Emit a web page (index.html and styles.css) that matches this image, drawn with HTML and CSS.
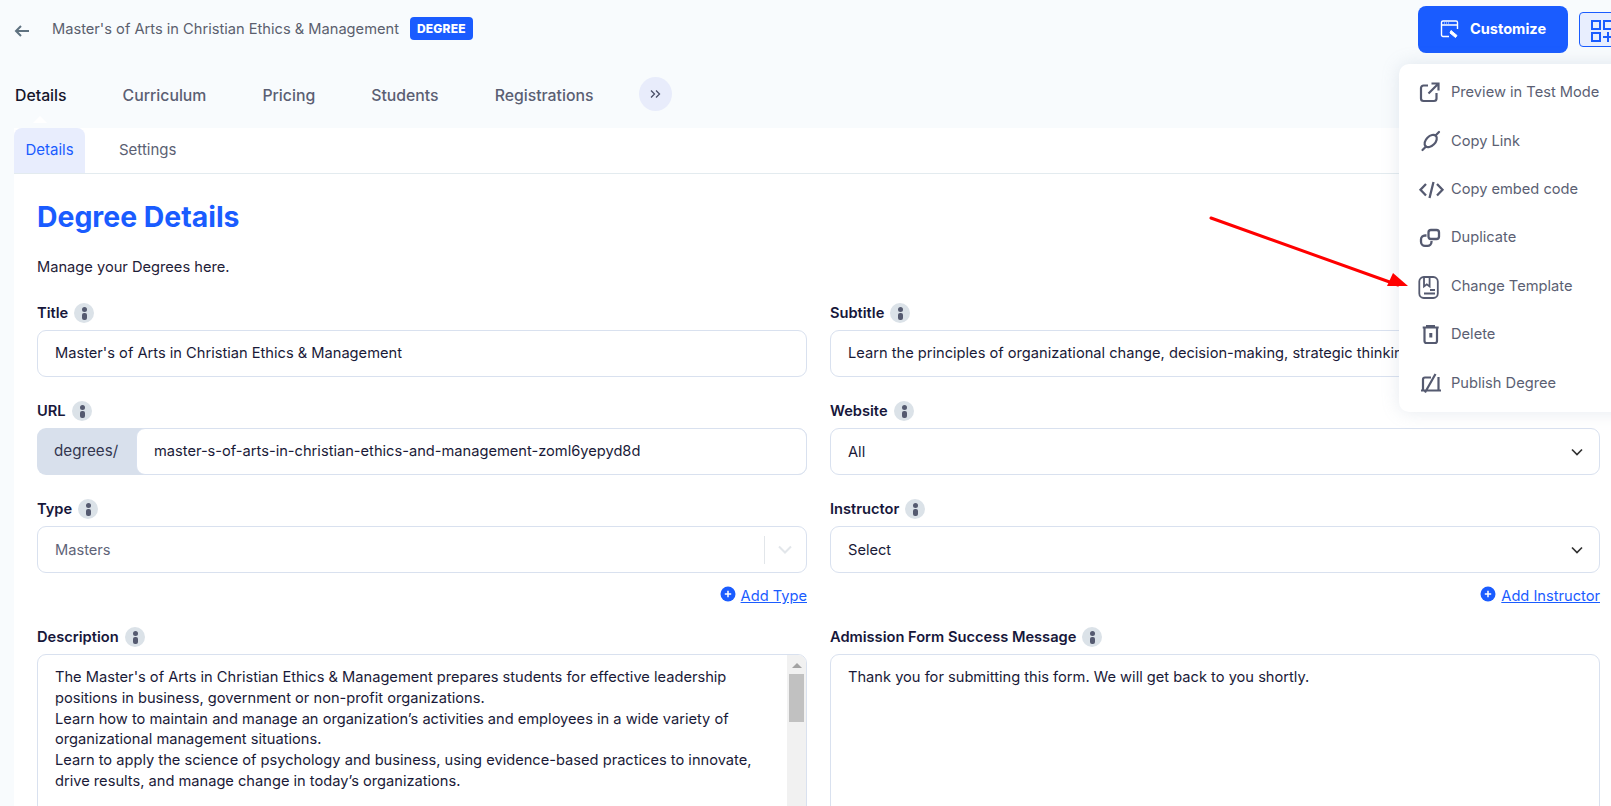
FILE: index.html
```html
<!DOCTYPE html>
<html lang="en">
<head>
<meta charset="utf-8">
<title>Degree Details</title>
<link rel="stylesheet" href="styles.css">
</head>
<body>
<header class="topbar">
  <svg class="back" viewBox="0 0 16 14" width="16" height="14"><path d="M15 7H2M7 2L2 7l5 5" fill="none" stroke="#5f7280" stroke-width="2"/></svg>
  <span class="crumb">Master's of Arts in Christian Ethics &amp; Management</span>
  <span class="badge">DEGREE</span>
  <div class="actions">
    <button class="customize">
      <svg viewBox="0 0 20 20" width="20" height="20" fill="none" stroke="#fff" stroke-width="1.400"><path d="M9 17.500H3a1.500 1.500 0 0 1-1.500-1.500V3.500A1.500 1.500 0 0 1 3 2h13a1.500 1.500 0 0 1 1.500 1.500V10M1.500 6h16"/><path d="M11 11.500l6 5-1.500 2-5.500-4.500z" fill="#fff" stroke-width="1"/><path d="M4 4h.8M6 4h.8M8 4h.8" stroke-width="1"/></svg>
      Customize
    </button>
    <button class="apps">
      <svg viewBox="0 0 24 24" width="24" height="24" fill="none" stroke="#1a5cff" stroke-width="2"><rect x="2" y="2" width="8" height="8"/><rect x="14" y="2" width="8" height="8"/><rect x="2" y="14" width="8" height="8"/><path d="M18 13v10M13 18h10"/></svg>
    </button>
  </div>
</header>

<nav class="tabs">
  <a class="tab active">Details</a>
  <a class="tab">Curriculum</a>
  <a class="tab">Pricing</a>
  <a class="tab">Students</a>
  <a class="tab">Registrations</a>
  <span class="more">
    <svg viewBox="0 0 12 10" width="12" height="10" fill="none" stroke="#4a4f66" stroke-width="1.300"><path d="M2 1.500L5.500 5 2 8.500M7 1.500L10.500 5 7 8.500"/></svg>
  </span>
</nav>

<main class="panel">
  <div class="subtabs">
    <a class="subtab active">Details</a>
    <a class="subtab">Settings</a>
  </div>
  <section class="body">
    <h1>Degree Details</h1>
    <p class="lead">Manage your Degrees here.</p>
    <div class="grid">
      <div class="field">
        <label>Title <i class="info"></i></label>
        <div class="input">Master's of Arts in Christian Ethics &amp; Management</div>
      </div>
      <div class="field">
        <label>Subtitle <i class="info"></i></label>
        <div class="input">Learn the principles of organizational change, decision-making, strategic thinking and leadership</div>
      </div>
      <div class="field">
        <label>URL <i class="info"></i></label>
        <div class="urlgroup">
          <span class="prefix">degrees/</span>
          <div class="input urlinput">master-s-of-arts-in-christian-ethics-and-management-zoml6yepyd8d</div>
        </div>
      </div>
      <div class="field">
        <label>Website <i class="info"></i></label>
        <div class="input select">All
          <svg class="chev" viewBox="0 0 12 8" width="12" height="8"><path d="M1 1.500l5 5 5-5" fill="none" stroke="#333" stroke-width="1.700"/></svg>
        </div>
      </div>
      <div class="field">
        <label>Type <i class="info"></i></label>
        <div class="input select disabled">Masters
          <span class="sep"></span>
          <svg class="chev" viewBox="0 0 14 9" width="14" height="9"><path d="M1 1.500l6 6 6-6" fill="none" stroke="#e2e6ea" stroke-width="2"/></svg>
        </div>
        <div class="addrow"><svg viewBox="0 0 16 16" width="16" height="16"><circle cx="8" cy="8" r="7.500" fill="#1a5cff"/><path d="M8 4.800v6.400M4.800 8h6.400" stroke="#fff" stroke-width="1.500"/></svg><a>Add Type</a></div>
      </div>
      <div class="field">
        <label>Instructor <i class="info"></i></label>
        <div class="input select">Select
          <svg class="chev" viewBox="0 0 12 8" width="12" height="8"><path d="M1 1.500l5 5 5-5" fill="none" stroke="#333" stroke-width="1.700"/></svg>
        </div>
        <div class="addrow"><svg viewBox="0 0 16 16" width="16" height="16"><circle cx="8" cy="8" r="7.500" fill="#1a5cff"/><path d="M8 4.800v6.400M4.800 8h6.400" stroke="#fff" stroke-width="1.500"/></svg><a>Add Instructor</a></div>
      </div>
      <div class="field">
        <label>Description <i class="info"></i></label>
        <div class="area">
          <div class="areatext">The Master's of Arts in Christian Ethics &amp; Management prepares students for effective leadership<br>positions in business, government or non-profit organizations.<br>Learn how to maintain and manage an organization’s activities and employees in a wide variety of<br>organizational management situations.<br>Learn to apply the science of psychology and business, using evidence-based practices to innovate,<br>drive results, and manage change in today’s organizations.</div>
          <div class="scrollbar"><span class="up"></span><span class="thumb"></span></div>
        </div>
      </div>
      <div class="field">
        <label>Admission Form Success Message <i class="info"></i></label>
        <div class="area"><div class="areatext">Thank you for submitting this form. We will get back to you shortly.</div></div>
      </div>
    </div>
  </section>
</main>

<ul class="menu">
  <li><svg viewBox="0 0 22 22" width="22" height="22" fill="none" stroke="#555a70" stroke-width="2.200"><path d="M10 4.500H5.500A2.500 2.500 0 0 0 3 7v10.500A2.500 2.500 0 0 0 5.500 20H16a2.500 2.500 0 0 0 2.500-2.500V12"/><path d="M10.500 12.500L20 3M13.500 2.500h7v7"/></svg>Preview in Test Mode</li>
  <li><svg viewBox="0 0 22 22" width="22" height="22" fill="none" stroke="#555a70" stroke-width="2.200"><path d="M4.500 20L8 16.500M17.500 5.500L21 2" stroke-linecap="round"/><ellipse cx="12.700" cy="11" rx="7.300" ry="4.600" transform="rotate(-45 12.700 11)"/></svg>Copy Link</li>
  <li><svg viewBox="0 0 22 22" width="22" height="22" fill="none" stroke="#555a70" stroke-width="2.300"><path d="M8 6l-5.500 5.800L8 17.500M19 6l5.500 5.800L19 17.500M15.500 4L11.500 20"/></svg>Copy embed code</li>
  <li><svg viewBox="0 0 22 22" width="22" height="22" fill="none" stroke="#555a70" stroke-width="2.300"><rect x="10.500" y="4" width="10.500" height="9" rx="2.500"/><path d="M8.500 9.500H7a4 4 0 0 0-4 4v2.300a4 4 0 0 0 4 4h2.500a4 4 0 0 0 4-4V15"/></svg>Duplicate</li>
  <li><svg viewBox="0 0 22 22" width="22" height="22" fill="none" stroke="#555a70" stroke-width="1.800"><rect x="1.300" y="2" width="18.500" height="21" rx="4.500"/><path d="M6 2.500v9l2.800-2.200 2.800 2.200v-9M12 15h5M6 18.500h11"/></svg>Change Template</li>
  <li><svg viewBox="0 0 22 22" width="22" height="22" fill="none" stroke="#555a70" stroke-width="2.200"><path d="M4.700 4.500h16M8 3.200h9M6.500 4.500V18a2 2 0 0 0 2 2h8.500a2 2 0 0 0 2-2V4.500"/><path d="M12.800 10v4.500" stroke-width="3"/></svg>Delete</li>
  <li><svg viewBox="0 0 22 22" width="22" height="22" fill="none" stroke="#555a70" stroke-width="2.200"><path d="M3 18.500h20M5 18V7.500a2 2 0 0 1 2-2h6M20.500 5v13.500M17.500 2L7 20.500"/></svg>Publish Degree</li>
</ul>

<svg class="arrow" viewBox="0 0 1611 806" width="1611" height="806"><path d="M1211 218L1398 285" stroke="#f00" stroke-width="3" stroke-linecap="round"/><path d="M1408 286L1387 286L1393 273Z" fill="#f00"/></svg>
</body>
</html>
```
FILE: styles.css
```css
* { box-sizing: border-box; }
html, body { margin: 0; height: 100%; overflow: hidden; }
body {
  width: 1611px;
  height: 806px;
  background: #f8fbfd;
  font-family: Inter, "Liberation Sans", sans-serif;
  color: #17173b;
  font-size: 14.650px;
}
.topbar {
  display: flex;
  align-items: center;
  height: 58px;
  padding-left: 14px;
  width: 1625px;
}
.back { margin-right: 22px; margin-top: 3px; }
.crumb { color: #5b5f6e; font-size: 14.650px; margin-top: -1px; }
.badge {
  margin-left: 11px;
  background: #1a5cff;
  color: #fff;
  font-weight: 800;
  font-size: 12px;
  letter-spacing: .2px;
  padding: 0 7px;
  height: 23px;
  line-height: 23px;
  border-radius: 4px;
  margin-top: -2px;
}
.actions { margin-left: auto; display: flex; align-items: center; gap: 11px; }
.customize {
  width: 150px;
  height: 47px;
  border: 0;
  border-radius: 8px;
  background: #1a5cff;
  color: #fff;
  font: 700 14.600px Inter, sans-serif;
  display: flex;
  align-items: center;
  justify-content: center;
  gap: 10px;
}
.apps {
  width: 46px;
  height: 35px;
  background: #e8eefe;
  border: 1px solid #1a5cff;
  border-radius: 4px;
  padding: 3px 0 0 10px;
}
.apps svg { display: block; }
.tabs {
  display: flex;
  align-items: center;
  height: 70px;
  padding: 5px 0 0 15px;
  gap: 56px;
}
.tab { font-size: 15.800px; font-weight: 500; color: #5b5f73; }
.tab.active { color: #15152b; position: relative; }
.tab.active::after {
  content: "";
  position: absolute;
  left: 18px;
  top: 30px;
  border: 7px solid transparent;
  border-top: 0;
  border-bottom: 7px solid #fff;
}
.more {
  width: 33px;
  height: 34px;
  border-radius: 50%;
  background: #e8ecfb;
  margin-left: -11px;
  margin-top: -3px;
  display: flex;
  align-items: center;
  justify-content: center;
}
.panel { margin-left: 14px; background: #fff; height: 678px; overflow: hidden; }
.subtabs { display: flex; height: 46px; border-bottom: 1px solid #e3ebef; }
.subtab { height: 45px; line-height: 44px; font-size: 15px; color: #5b5f73; }
.subtab.active {
  width: 71px;
  text-align: center;
  background: #e8edfd;
  color: #1a5cff;
  border-radius: 8px 8px 0 0;
  margin-right: 34px;
}
.body { padding: 26px 11px 0 23px; }
h1 { margin: 0; font-size: 28.400px; line-height: 34px; font-weight: 700; color: #1a5cff; }
.lead { margin: 23px 0 0; font-size: 14.650px; line-height: 20px; color: #1f2138; }
.grid { display: grid; grid-template-columns: 770px 770px; column-gap: 23px; margin-top: 26px; row-gap: 24px; }
.field { min-width: 0; }
label { display: flex; align-items: center; gap: 6px; height: 20px; font-size: 14.650px; font-weight: 600; margin-bottom: 7px; }
.info {
  width: 20px; height: 20px; border-radius: 50%; background: #dbe2e8; position: relative; display: block;
}
.info::before {
  content: ""; position: absolute; left: 8px; top: 4px; width: 5px; height: 5px; border-radius: 50%; background: #555a70;
}
.info::after {
  content: ""; position: absolute; left: 8px; top: 10px; width: 5px; height: 7px; border-radius: 2px; background: #555a70;
}
.input {
  height: 47px;
  line-height: 45px;
  border: 1px solid #d9e1ef;
  border-radius: 9px;
  padding: 0 17px;
  background: #fff;
  font-size: 14.650px;
  white-space: nowrap;
  overflow: hidden;
  color: #1a1a38;
}
.urlgroup { display: flex; background: #d8e0ec; border-radius: 9px; height: 47px; }
.prefix { width: 99px; line-height: 46px; padding-left: 17px; font-size: 15.200px; color: #33364f; }
.urlinput { flex: 1; }
.select { display: flex; align-items: center; line-height: normal; }
.select .chev { margin-left: auto; margin-right: -1px; }
.disabled { color: #5f6478; }
.sep { margin-left: auto; width: 1px; height: 28px; background: #e2e6ea; }
.disabled .chev { margin-left: 13px; margin-right: -3px; }
.addrow { display: flex; justify-content: flex-end; align-items: center; gap: 5px; margin-top: 13px; height: 20px; margin-bottom: -3px; }
.addrow svg { margin-top: -4px; }
.addrow a { color: #1a5cff; text-decoration: underline; font-size: 14.650px; }
.area {
  display: flex;
  height: 300px;
  border: 1px solid #d9e1ef;
  border-radius: 9px;
  overflow: hidden;
  background: #fff;
}
.areatext { flex: 1; padding: 12px 17px; font-size: 14.650px; line-height: 20.800px; color: #1a1a38; white-space: nowrap; }
.scrollbar { width: 19px; background: #f1f1f1; padding: 8px 2px 0; flex: none; }
.up { display: block; width: 0; height: 0; margin: 0 auto; border: 5px solid transparent; border-top: 0; border-bottom: 5px solid #a3a3a3; }
.thumb { display: block; height: 48px; margin-top: 6px; background: #c1c1c1; }
.menu {
  position: absolute;
  left: 1399px;
  top: 64px;
  width: 240px;
  height: 348px;
  margin: 0;
  padding: 4px 0 0;
  list-style: none;
  background: #fff;
  border-radius: 10px;
  box-shadow: 0 0 18px rgba(140, 160, 180, .22);
}
.menu li {
  display: flex;
  align-items: center;
  gap: 11px;
  height: 48.400px;
  padding-left: 19px;
  font-size: 14.650px;
  color: #5b5f73;
}
.menu svg { overflow: visible; }
.arrow { position: absolute; left: 0; top: 0; pointer-events: none; }
```
